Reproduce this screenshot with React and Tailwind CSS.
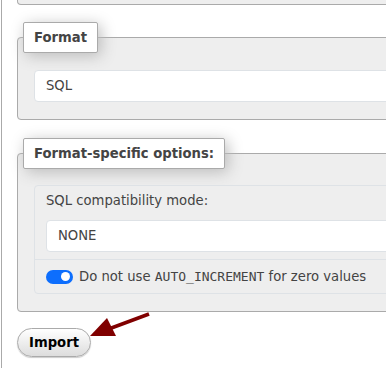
import React from "react";

const sans = { fontFamily: '"DejaVu Sans", sans-serif' };

export default function App() {
  return (
    <div className="relative w-[386px] h-[368px] overflow-hidden bg-white" style={sans}>
      <div className="ml-px h-[368px] border-l border-[#aaa] pl-[15px] text-[13.2px] text-[#444]">
        <div className="w-[400px] h-[5px] border-x border-b border-[#aaa] rounded-b-[4px] bg-[#eee]" />

        <fieldset className="mt-[17px] w-[400px] border border-[#aaa] rounded-[4px] bg-[#eee] p-0 m-0 min-w-0">
          <legend className="ml-[5px] h-[31px] px-[10px] flex items-center bg-white border border-[#aaa] rounded-[2px] shadow-[3px_3px_15px_#bbb] font-bold text-[13.2px] text-[#444]">
            Format
          </legend>
          <div className="pt-[17px] pb-[17px] pl-[16px]">
            <div className="h-[32px] border border-[#dee2e6] rounded-[4px] bg-white pl-[11px] flex items-center text-[13.2px] text-[#444]">
              SQL
            </div>
          </div>
        </fieldset>

        <fieldset className="mt-[18px] w-[400px] border border-[#aaa] rounded-[4px] bg-[#eee] p-0 m-0 min-w-0">
          <legend className="ml-[5px] h-[31px] px-[10px] flex items-center bg-white border border-[#aaa] rounded-[2px] shadow-[3px_3px_15px_#bbb] font-bold text-[13.2px] text-[#444]">
            Format-specific options:
          </legend>
          <div className="pt-[16px] pb-[17px] pl-[16px]">
            <div className="border border-[#dee2e6] rounded-[4px] bg-[#eee]">
              <div className="pt-[5px] pb-[7px] pl-[11px] border-b border-[#dee2e6]">
                <div className="h-[20px] leading-[20px] text-[13.2px]">SQL compatibility mode:</div>
                <div className="mt-[9px] h-[32px] border border-[#dee2e6] rounded-[4px] bg-white pl-[11px] flex items-center text-[13.2px]">
                  NONE
                </div>
              </div>
              <div className="h-[33px] pl-[11px] flex items-center gap-[6px] text-[13.2px]">
                <div className="w-[27px] h-[14px] rounded-full bg-[#0d6efd] flex items-center justify-end pr-[3px]">
                  <div className="w-[9px] h-[9px] rounded-full bg-white" />
                </div>
                <span>
                  Do not use <code style={{ fontFamily: '"DejaVu Sans Mono", monospace' }} className="text-[13px]">AUTO_INCREMENT</code> for zero values
                </span>
              </div>
            </div>
          </div>
        </fieldset>

        <button className="mt-[16px] w-[74px] h-[29px] rounded-full border border-[#aaa] bg-gradient-to-b from-white to-[#ddd] font-bold text-[13.2px] text-black flex items-center justify-center shadow-[0_1px_1px_#ccc]">
          Import
        </button>
      </div>

      <svg className="absolute left-0 top-0 pointer-events-none" width="386" height="368">
        <line x1="149" y1="314" x2="106" y2="330" stroke="#800000" strokeWidth="3.5" />
        <polygon points="90,336 107,318 116,336" fill="#800000" />
      </svg>
    </div>
  );
}
